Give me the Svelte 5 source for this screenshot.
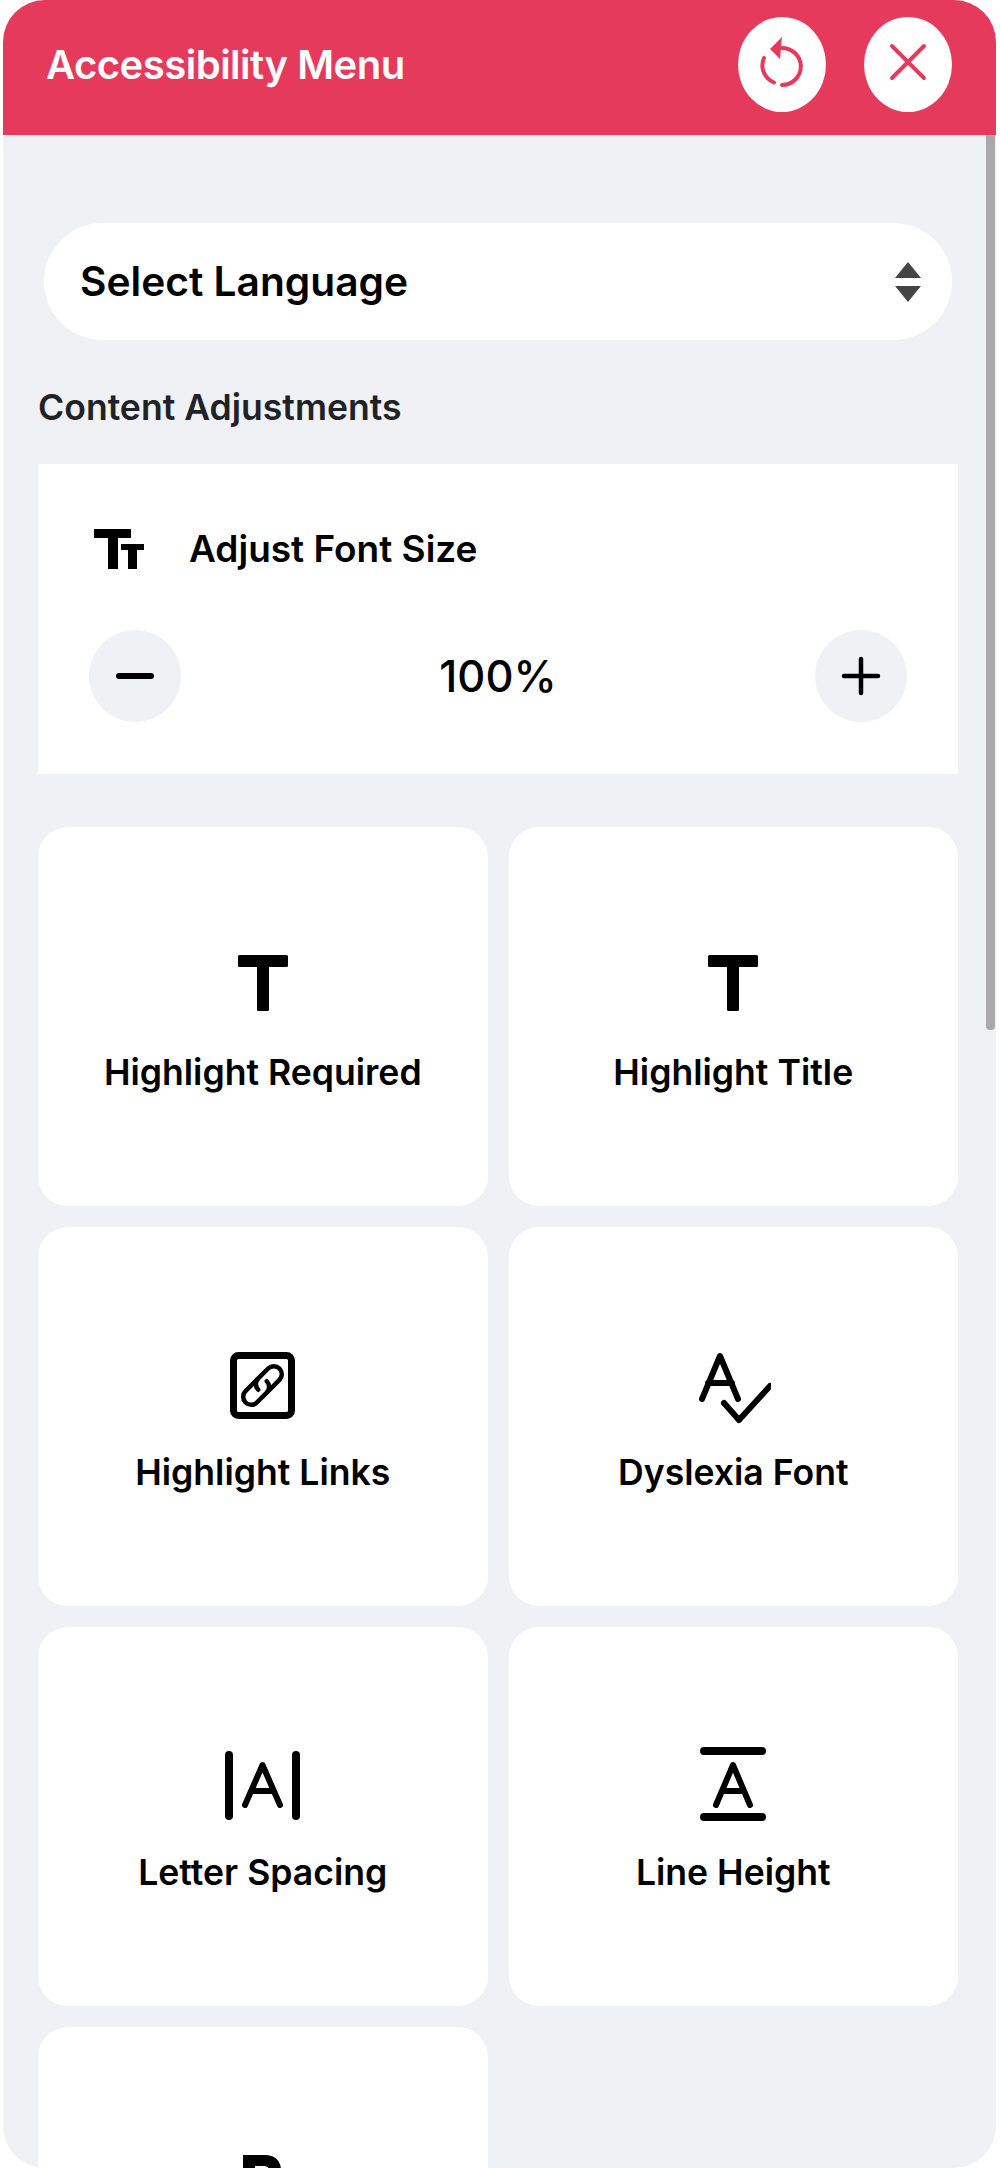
<script>
    // last tile is cut off by the bottom of the panel, so only its icon shows
    const tools = [
        { label: 'Highlight Required', icon: 'title' },
        { label: 'Highlight Title', icon: 'title' },
        { label: 'Highlight Links', icon: 'link' },
        { label: 'Dyslexia Font', icon: 'dyslexia' },
        { label: 'Letter Spacing', icon: 'spacing' },
        { label: 'Line Height', icon: 'height' },
        { label: '', icon: 'bold' }
    ];

    let size = $state(100);
</script>

<div class="panel">
    <header>
        <h1>Accessibility Menu</h1>
        <div class="head-actions">
            <button class="round" aria-label="Reset">
                <svg viewBox="0 0 48 56" width="48" height="56" fill="none" stroke="#e63a5d" stroke-width="4" stroke-linecap="round">
                    <path d="M23.700 14A19 18.500 0 0 1 24 51" />
                    <path d="M16 48.500A19 18.500 0 0 1 6 24" />
                    <path d="M12 15L24 3l-2 22z" fill="#e63a5d" stroke="none" />
                </svg>
            </button>
            <button class="round" aria-label="Close">
                <svg viewBox="0 0 38 38" width="38" height="38" fill="none" stroke="#e63a5d" stroke-width="4" stroke-linecap="round">
                    <path d="M3 3l32 32M35 3L3 35" />
                </svg>
            </button>
        </div>
    </header>

    <div class="scroll">
        <div class="select">
            <span>Select Language</span>
            <svg viewBox="0 0 26 40" width="26" height="40" fill="#444">
                <path d="M13 0l13 16H0zM0 24h26L13 40z" />
            </svg>
        </div>

        <h2>Content Adjustments</h2>

        <section class="font-card">
            <div class="font-title">
                <svg viewBox="0 0 50 40" width="50" height="40" fill="#000">
                    <path d="M0 0h37v9H24v31H14V9H0zM27 15h23v6h-7v19h-9V21h-7z" />
                </svg>
                <span>Adjust Font Size</span>
            </div>
            <div class="font-row">
                <button class="step" aria-label="Decrease" onclick={() => size -= 10}>
                    <svg viewBox="0 0 40 40" width="40" height="40" stroke="#000" stroke-width="6" stroke-linecap="round"><path d="M4 20h32" /></svg>
                </button>
                <span class="value">{size}%</span>
                <button class="step" aria-label="Increase" onclick={() => size += 10}>
                    <svg viewBox="0 0 40 40" width="40" height="40" stroke="#000" stroke-width="4.500" stroke-linecap="round"><path d="M3 20h34M20 3v34" /></svg>
                </button>
            </div>
        </section>

        <div class="grid">
            {#each tools as tool}
                <button class="tool">
                    <span class="tool-icon">
                        {#if tool.icon === 'title'}
                            <svg viewBox="0 0 52 80" width="52" height="80" fill="#000">
                                <path d="M1 9.500q0-1.500 1.500-1.500h47q1.500 0 1.500 1.500v9q0 1.500-1.500 1.500H32v42.500q0 1.500-1.500 1.500h-9q-1.500 0-1.500-1.500V20H2.500Q1 20 1 18.500z" />
                            </svg>
                        {:else if tool.icon === 'link'}
                            <svg viewBox="0 0 65 80" width="65" height="80" fill="none" stroke="#000">
                                <rect x="3.500" y="8.500" width="58" height="60" rx="5" stroke-width="7" />
                                <g stroke-width="4.500" stroke-linecap="round" transform="translate(32.500 38.500) rotate(-45)">
                                    <path d="M-1 8H16a8 8 0 0 0 0-16H2a8 8 0 0 0-8 8" />
                                    <path d="M1-8H-16a8 8 0 0 0 0 16H-2a8 8 0 0 0 8-8" />
                                </g>
                            </svg>
                        {:else if tool.icon === 'dyslexia'}
                            <svg viewBox="-3 0 76 80" width="76" height="80" fill="none" stroke="#000" stroke-width="6" stroke-linecap="round" stroke-linejoin="round">
                                <path d="M4 52L22 9l18 43M10 36h24" />
                                <path d="M26 56l15 17 31-34" />
                            </svg>
                        {:else if tool.icon === 'spacing'}
                            <svg viewBox="0 0 75 80" width="75" height="80" fill="none" stroke="#000" stroke-linecap="round" stroke-linejoin="round">
                                <path d="M4 8v61M71 8v61" stroke-width="8" />
                                <path d="M20 58L37.500 18 55 58M27 44h21" stroke-width="6" />
                            </svg>
                        {:else if tool.icon === 'height'}
                            <svg viewBox="0 0 66 80" width="66" height="80" fill="none" stroke="#000" stroke-linecap="round" stroke-linejoin="round">
                                <path d="M4 4h58M4 70h58" stroke-width="8" />
                                <path d="M16 58L33 18l17 40M22 44h22" stroke-width="6" />
                            </svg>
                        {:else}
                            <svg viewBox="0 0 48 80" width="48" height="80" fill="#000">
                                <path fill-rule="evenodd" d="M4 8h22c10 0 16 6 16 15 0 6-3 10-7 12 6 2 10 7 10 14 0 11-8 19-19 19H4zM16 19v13h9c4 0 6-3 6-6.500s-2-6.500-6-6.500zM16 43v14h11c4 0 7-3 7-7s-3-7-7-7z" />
                            </svg>
                        {/if}
                    </span>
                    {#if tool.label}
                        <span class="tool-label">{tool.label}</span>
                    {/if}
                </button>
            {/each}
        </div>
    </div>

    <div class="scrollbar"></div>
</div>

<style>
    :global(body) {
        margin: 0;
        background: #fff;
    }

    .panel {
        position: relative;
        box-sizing: border-box;
        width: 993px;
        height: 2168px;
        margin-left: 3px;
        border-radius: 42px;
        overflow: hidden;
        background: #eff1f5;
        font-family: Inter, "Open Sans", sans-serif;
        color: #000;
    }

    header {
        display: flex;
        align-items: center;
        justify-content: space-between;
        height: 135px;
        padding: 0 44px 6px 43px;
        box-sizing: border-box;
        background: #e63a5d;
    }

    h1 {
        margin: 0;
        font-size: 40px;
        font-weight: 600;
        letter-spacing: -0.5px;
        color: #fff;
    }

    .head-actions {
        display: flex;
        gap: 38px;
    }

    button {
        border: none;
        padding: 0;
        font: inherit;
        color: inherit;
        cursor: pointer;
    }

    .round {
        display: flex;
        align-items: center;
        justify-content: center;
        width: 88px;
        height: 95px;
        border-radius: 50%;
        background: #fff;
    }

    .round svg {
        margin-bottom: 6px;
    }

    .scroll {
        padding: 88px 38px 0 35px;
    }

    .select {
        display: flex;
        align-items: center;
        justify-content: space-between;
        height: 117px;
        margin: 0 6px;
        padding: 0 31px 0 36px;
        border-radius: 59px;
        background: #fff;
        font-size: 40.7px;
        font-weight: 600;
    }

    h2 {
        margin: 49px 0 37px;
        font-size: 35.6px;
        line-height: 38px;
        font-weight: 600;
        color: #1f2328;
    }

    .font-card {
        height: 310px;
        box-sizing: border-box;
        padding: 62px 51px 0 51px;
        background: #fff;
    }

    .font-title {
        display: flex;
        align-items: center;
        gap: 45px;
        font-size: 37px;
        font-weight: 600;
    }

    .font-title svg {
        margin-left: 5px;
    }

    .font-row {
        display: flex;
        align-items: center;
        justify-content: space-between;
        margin-top: 59px;
    }

    .step {
        display: flex;
        align-items: center;
        justify-content: center;
        width: 92px;
        height: 92px;
        border-radius: 50%;
        background: #eff1f5;
    }

    .value {
        font-size: 43.5px;
        font-weight: 500;
    }

    .grid {
        display: grid;
        grid-template-columns: 1fr 1fr;
        gap: 21px;
        margin-top: 53px;
    }

    .tool {
        display: flex;
        flex-direction: column;
        align-items: center;
        height: 379px;
        padding-top: 120px;
        box-sizing: border-box;
        border-radius: 30px;
        background: #fff;
    }

    .tool-icon {
        display: flex;
        justify-content: center;
        height: 80px;
    }

    .tool-label {
        margin-top: 26px;
        font-size: 35.6px;
        line-height: 40px;
        font-weight: 600;
    }

    .scrollbar {
        position: absolute;
        top: 135px;
        right: 1px;
        width: 9px;
        height: 895px;
        border-radius: 0 0 4px 4px;
        background: #a9a9ab;
    }
</style>
